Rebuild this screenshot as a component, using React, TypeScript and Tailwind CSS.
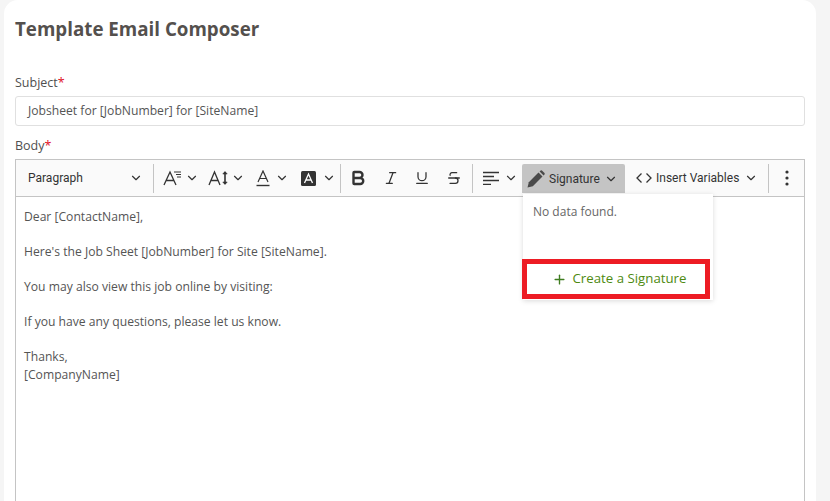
import React from 'react';
import { ChevronDown, Bold, Italic, Underline, Strikethrough, Plus } from 'lucide-react';

const Caret = () => <ChevronDown className="w-[14px] h-[14px] text-[#333]" strokeWidth={2} />;

const Divider = () => <div className="w-px h-[29px] bg-[#c4c4c4]" />;

const FontSizeIcon = () => (
  <svg width="20" height="16" viewBox="0 0 20 16" fill="none" stroke="#333" strokeWidth="1.3">
    <path d="M1 15 L7 2 L13 15 M3.2 10.5 H10.8" />
    <path d="M11 2 H18 M13 4.5 H18 M14 7 H18" strokeWidth="1" />
  </svg>
);

const LineHeightIcon = () => (
  <svg width="21" height="16" viewBox="0 0 21 16" fill="none" stroke="#333" strokeWidth="1.3">
    <path d="M1 15 L6.5 2 L12 15 M3 10.5 H10" />
    <path d="M17 2 V14" strokeWidth="1.6" />
    <path d="M14.8 4 L17 1.5 L19.2 4 Z M14.8 12 L17 14.5 L19.2 12 Z" fill="#333" strokeWidth="0.6" />
  </svg>
);

const FontColorIcon = () => (
  <svg width="14" height="17" viewBox="0 0 14 17" fill="none" stroke="#333" strokeWidth="1.2">
    <path d="M2 12 L7 1 L12 12 M3.8 8.5 H10.2" />
    <path d="M0.5 15.5 H13.5" strokeWidth="1.4" />
  </svg>
);

const BackColorIcon = () => (
  <svg width="15" height="15" viewBox="0 0 15 15">
    <rect width="15" height="15" rx="1.5" fill="#333" />
    <path d="M3.5 12 L7.5 3 L11.5 12 M5 9 H10" fill="none" stroke="#fff" strokeWidth="1.3" />
  </svg>
);

const AlignIcon = () => (
  <svg width="16" height="14" viewBox="0 0 16 14" fill="none" stroke="#333" strokeWidth="1.3">
    <path d="M0 1.5 H16 M0 5.5 H11 M0 9.5 H16 M0 13.5 H8" />
  </svg>
);

const PencilIcon = () => (
  <svg width="18" height="18" viewBox="0 0 18 18" fill="#4a4a4a">
    <path d="M0.5 17.5 L1.8 12.2 L11.5 2.5 L15.5 6.5 L5.8 16.2 Z" />
    <path d="M12.6 1.4 L13.6 0.5 Q14.2 0 14.9 0.5 L17.5 3.1 Q18 3.8 17.5 4.4 L16.6 5.4 Z" />
  </svg>
);

const CodeIcon = () => (
  <svg width="16" height="12" viewBox="0 0 16 12" fill="none" stroke="#333" strokeWidth="1.3">
    <path d="M5.5 1.5 L1 6 L5.5 10.5 M10.5 1.5 L15 6 L10.5 10.5" />
  </svg>
);

const DotsIcon = () => (
  <svg width="4" height="16" viewBox="0 0 4 16" fill="#333">
    <circle cx="2" cy="2" r="1.6" />
    <circle cx="2" cy="8" r="1.6" />
    <circle cx="2" cy="14" r="1.6" />
  </svg>
);

const Required = () => <span className="text-[#e0101f]">*</span>;

export default function App() {
  return (
    <div className="h-[501px] overflow-hidden bg-[#f5f5f5] pl-[4px] pr-[14px] font-['Open_Sans',sans-serif] text-[#555]">
      <div className="h-full rounded-t-[14px] bg-white px-[11px] pt-[16px]">
        <h1 className="text-[18.75px] leading-[26px] font-bold text-[#54504d]">Template Email Composer</h1>

        <label className="mt-[31px] block text-[12.5px] leading-[20px] font-medium text-[#4f4f4f]">
          Subject<Required />
        </label>
        <div className="mt-[3px] flex h-[30px] items-center rounded-[3px] border border-[#e0e0e0] pl-[12px] text-[12.15px] text-[#555]">
          Jobsheet for [JobNumber] for [SiteName]
        </div>

        <label className="mt-[10px] block text-[12.5px] leading-[20px] font-medium text-[#4f4f4f]">
          Body<Required />
        </label>

        <div className="relative mt-[3px] h-[400px] border border-[#c4c4c4]">
          <div className="flex h-[37px] items-center border-b border-[#c4c4c4] bg-[#fafafa] font-['Roboto',sans-serif] text-[12px] text-[#333]">
            <div className="flex w-[137px] items-center justify-between pr-[10px] pl-[12px]">
              <span>Paragraph</span>
              <Caret />
            </div>
            <Divider />
            <div className="flex w-[45px] items-center gap-[2px] pl-[9px]"><FontSizeIcon /><Caret /></div>
            <div className="flex w-[46px] items-center gap-[2px] pl-[9px]"><LineHeightIcon /><Caret /></div>
            <div className="flex w-[47px] items-center gap-[5px] pl-[11px]"><FontColorIcon /><Caret /></div>
            <div className="flex w-[48px] items-center gap-[6px] pl-[9px]"><BackColorIcon /><Caret /></div>
            <Divider />
            <div className="flex w-[34px] justify-center"><Bold className="h-[18px] w-[18px] text-[#333]" strokeWidth={3.2} /></div>
            <div className="flex w-[32px] justify-center"><Italic className="h-[16px] w-[16px] text-[#333]" strokeWidth={1.9} /></div>
            <div className="flex w-[32px] justify-center pr-[2px]"><Underline className="h-[16px] w-[16px] text-[#333]" strokeWidth={1.9} /></div>
            <div className="flex w-[32px] justify-center pr-[2px]"><Strikethrough className="h-[16px] w-[16px] text-[#333]" strokeWidth={1.9} /></div>
            <div className="w-px" />
            <Divider />
            <div className="flex w-[49px] items-center gap-[5px] pl-[10px]"><AlignIcon /><Caret /></div>
            <div className="mb-[3px] flex h-[29px] w-[103px] items-center gap-[4px] self-end rounded-t-[2px] bg-[#c4c4c4] pl-[5px]">
              <PencilIcon />
              <span>Signature</span>
              <Caret />
            </div>
            <div className="flex w-[143px] items-center pl-[11px]">
              <CodeIcon />
              <span className="ml-[4px]">Insert Variables</span>
              <span className="ml-[5px]"><Caret /></span>
            </div>
            <Divider />
            <div className="flex flex-1 justify-center"><DotsIcon /></div>
          </div>

          <div className="px-[8px] pt-[11px] text-[12.15px] leading-[17.5px] text-[#555]">
            <p>Dear [ContactName],</p>
            <p className="mt-[17.5px]">Here's the Job Sheet [JobNumber] for Site [SiteName].</p>
            <p className="mt-[17.5px]">You may also view this job online by visiting:</p>
            <p className="mt-[17.5px]">If you have any questions, please let us know.</p>
            <p className="mt-[17.5px]">Thanks,</p>
            <p>[CompanyName]</p>
          </div>

          {/* dropdown */}
          <div className="absolute top-[34px] left-[507px] h-[106px] w-[190px] bg-white text-[12px] text-[#666] shadow-[0_1px_5px_rgba(0,0,0,0.15)]">
            <div className="pt-[9px] pl-[10px] leading-[17px]">No data found.</div>
            <div className="absolute top-[65px] -left-px flex h-[40px] w-[188px] items-center justify-center gap-[6px] border-[5px] border-[#ed1c24] bg-white pl-[6px] text-[13.25px] text-[#4d8a10]">
              <Plus className="h-[15px] w-[15px] text-[#3f7d20]" strokeWidth={2.2} />
              <span>Create a Signature</span>
            </div>
          </div>
        </div>
      </div>
    </div>
  );
}
